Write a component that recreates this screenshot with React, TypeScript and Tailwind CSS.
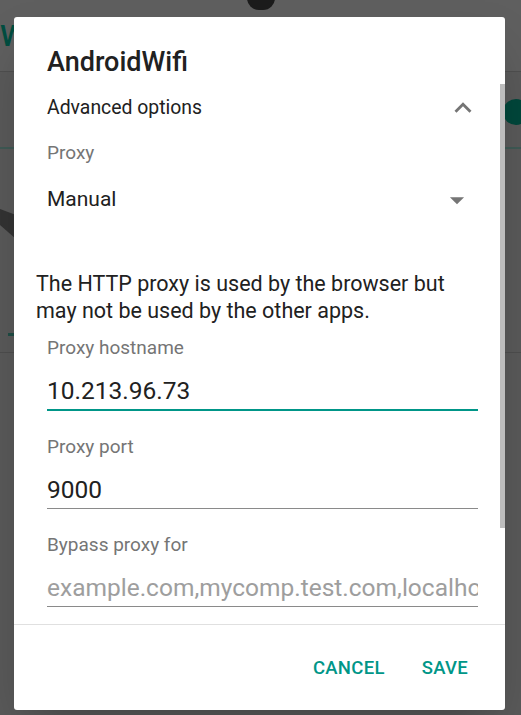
import React from "react";

const font = { fontFamily: "Roboto, 'Noto Sans', sans-serif" };

const Field = ({ label, value, placeholder, focused }: { label: string; value?: string; placeholder?: string; focused?: boolean }) => (
    <div className="flex flex-col">
        <div className="text-[19px] leading-[24px] text-[#757575]">{label}</div>
        <div
            className={`mt-[15px] pb-[2px] overflow-hidden whitespace-nowrap ${
                focused ? "border-b-2 border-[#009688]" : "border-b border-[#8a8a8a]"
            }`}
        >
            <span className={`text-[24.5px] leading-[32px] ${value ? "text-[#212121]" : "text-[#9e9e9e]"}`}>
                {value ?? placeholder}
            </span>
        </div>
    </div>
);

const Background = () => (
    <div className="flex flex-col h-full">
        {/* app bar behind the scrim */}
        <div className="h-[72px] bg-[#5f5f5f] border-b border-[#4f4f4f] flex items-center relative">
            <span className="text-[30px] font-medium text-[#004d40]">W</span>
            <div className="absolute left-[247px] -top-[14px] w-[28px] h-[24px] rounded-full bg-[#1c1c1c]" />
        </div>
        <div className="flex-1 bg-[#5a5a5a] flex flex-col">
            <div className="h-[77px] border-b-2 border-[#3f5a55] flex justify-end items-start pt-[27px]">
                <div className="w-[26px] h-[26px] rounded-full bg-[#00473b] -mr-[8px]" />
            </div>
            <div className="h-[58px] pt-[60px]">
                <svg width="16" height="30" viewBox="0 0 16 30">
                    <path d="M0 0 L16 6 L16 30 L0 16 Z" fill="#333" />
                </svg>
            </div>
            <div className="h-[143px] flex items-end">
                <div className="w-[6px] h-[3px] bg-[#1f4d45] ml-[8px] mb-[16px]" />
            </div>
            <div className="border-t border-[#4e4e4e] flex-1" />
        </div>
    </div>
);

export default function App() {
    return (
        <div className="relative w-[521px] h-[715px] overflow-hidden" style={font}>
            <Background />

            {/* Dialog */}
            <div className="absolute left-[14px] top-[17px] w-[491px] h-[693px] bg-white rounded-[3px] shadow-2xl flex flex-col">
                <div className="pl-[33px] pt-[29px] text-[27px] leading-[32px] font-medium text-[#212121]">AndroidWifi</div>

                <div className="relative flex-1 overflow-hidden mt-[6px]">
                    {/* scrollbar */}
                    <div className="absolute right-0 top-[-5px] w-[5px] h-[449px] bg-[#bdbdbd]" />

                    <div className="flex items-center justify-between h-[48px] pl-[33px] pr-[25px]">
                        <span className="text-[19.4px] text-[#212121]">Advanced options</span>
                        <svg width="34" height="34" viewBox="0 0 24 24" fill="#757575">
                            <path d="M7.41 15.41L12 10.83l4.59 4.58L18 14l-6-6-6 6z" />
                        </svg>
                    </div>

                    <div className="pl-[33px] pr-[27px] mt-[9px]">
                        <div className="text-[19px] leading-[24px] text-[#757575]">Proxy</div>
                        <div className="flex items-center justify-between h-[48px] mt-[11px]">
                            <span className="text-[21px] text-[#212121]">Manual</span>
                            <svg width="34" height="34" viewBox="0 0 24 24" fill="#757575" className="mr-[4px]">
                                <path d="M7 10l5 5 5-5z" />
                            </svg>
                        </div>
                    </div>

                    <p className="pl-[22px] pr-[30px] mt-[46px] text-[21.5px] leading-[27px] text-[#212121]">
                        The HTTP proxy is used by the browser but may not be used by the other apps.
                    </p>

                    <div className="pl-[33px] pr-[27px] mt-[12px] flex flex-col gap-[24px]">
                        <Field label="Proxy hostname" value="10.213.96.73" focused />
                        <Field label="Proxy port" value="9000" />
                        <Field label="Bypass proxy for" placeholder="example.com,mycomp.test.com,localhost" />
                    </div>
                </div>

                <div className="border-t border-[#e0e0e0] h-[86px] flex items-center justify-end gap-[37px] pr-[37px] pt-[2px]">
                    <button className="text-[18.5px] font-medium text-[#009688] tracking-[0.3px]">CANCEL</button>
                    <button className="text-[18.5px] font-medium text-[#009688] tracking-[0.3px]">SAVE</button>
                </div>
            </div>
        </div>
    );
}
